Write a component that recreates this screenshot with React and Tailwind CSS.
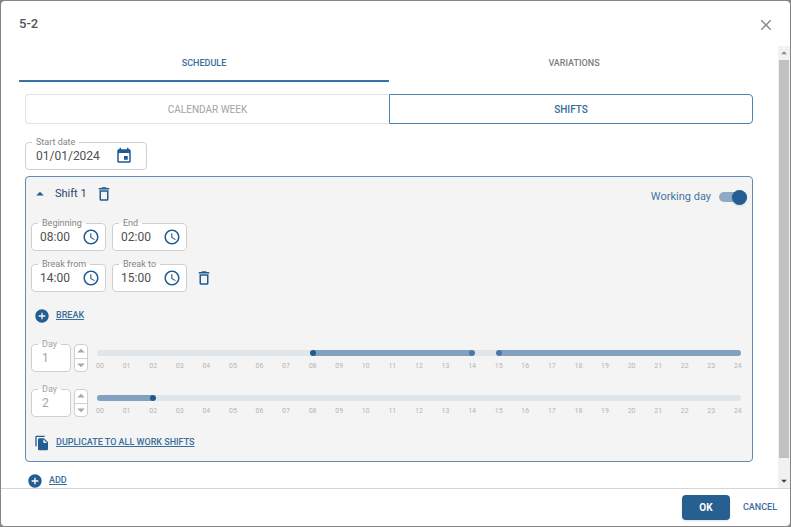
import { useState } from 'react';
import {
  MdAccessTime,
  MdAddCircle,
  MdArrowDropDown,
  MdArrowDropUp,
  MdClose,
  MdDeleteOutline,
  MdEvent,
  MdFileCopy,
} from 'react-icons/md';

const HOURS = Array.from({ length: 25 }, (_, i) => String(i).padStart(2, '0'));

const DAYS = [
  {
    day: 1,
    ranges: [{ from: 8, to: 14 }, { from: 15, to: 24, openEnd: true }],
    points: [{ at: 8, main: true }, { at: 14 }, { at: 15 }],
  },
  {
    day: 2,
    ranges: [{ from: 0, to: 2, openStart: true }],
    points: [{ at: 2, main: true }],
  },
];

const percent = (hour) => `${(hour / 24) * 100}%`;

function Field({ id, label, value, icon: Icon, iconLabel, className, rowClassName }) {
  const [text, setText] = useState(value);

  return (
    <fieldset className={`h-[33px] min-w-0 rounded border border-[#cfcfcf] bg-white ${className}`}>
      <legend className="ml-1.5 h-[10px] px-1 text-[9px] leading-[10px] text-[#858585]">
        <label htmlFor={id}>{label}</label>
      </legend>
      <div className={`flex h-[18px] items-center justify-between ${rowClassName}`}>
        <input
          id={id}
          type="text"
          value={text}
          onChange={(e) => setText(e.target.value)}
          className="h-[18px] w-0 flex-1 bg-transparent text-[12px] text-[#505050] outline-none"
        />
        <button type="button" aria-label={iconLabel} className="text-[#1f5a90]">
          <Icon className="size-[18px]" />
        </button>
      </div>
    </fieldset>
  );
}

function TimeField(props) {
  return (
    <Field {...props} icon={MdAccessTime} iconLabel="Select time" className="w-[75px]" rowClassName="pr-[5px] pl-2" />
  );
}

function LinkButton({ icon: Icon, children }) {
  return (
    <button type="button" className="flex h-4 items-center gap-1.5 text-[9px] font-medium text-[#386d9c]">
      <Icon className="size-4 text-[#245d92]" />
      <span className="underline underline-offset-1">{children}</span>
    </button>
  );
}

function DayRow({ day, ranges, points }) {
  return (
    <div className="flex items-end">
      <fieldset disabled className="h-[33px] w-[40px] min-w-0 rounded border border-[#cfcfcf] bg-white">
        <legend className="ml-1.5 h-[10px] px-1 text-[9px] leading-[10px] text-[#a5a5a5]">
          <label htmlFor={`day-${day}`}>Day</label>
        </legend>
        <input
          id={`day-${day}`}
          type="text"
          value={day}
          readOnly
          className="block h-[18px] w-full bg-transparent pl-2.5 text-[12px] text-[#a5a5a5]"
        />
      </fieldset>

      <div className="ml-[3px] flex h-7 w-[14px] flex-col divide-y divide-[#cfcfcf] rounded border border-[#cfcfcf] bg-white text-[#a8a8a8]">
        <button type="button" disabled aria-label="Next day" className="flex min-h-0 flex-1 items-center justify-center">
          <MdArrowDropUp className="size-[18px] shrink-0" />
        </button>
        <button type="button" disabled aria-label="Previous day" className="flex min-h-0 flex-1 items-center justify-center">
          <MdArrowDropDown className="size-[18px] shrink-0" />
        </button>
      </div>

      <div className="ml-[9px] h-[22px] flex-1">
        <div className="h-1.5 rounded-full bg-[#e0e5ea] px-[3px]">
          <div className="relative h-full">
            {ranges.map((r) => (
              <div
                key={r.from}
                className={`absolute inset-y-0 bg-[#82a1be] ${r.openStart ? '-ml-[3px] rounded-l-full' : ''} ${r.openEnd ? '-mr-[3px] rounded-r-full' : ''}`}
                style={{ left: percent(r.from), right: percent(24 - r.to) }}
              />
            ))}
            {points.map((p) => (
              <span
                key={p.at}
                className={`absolute top-0 -ml-[3px] size-1.5 rounded-full ${p.main ? 'bg-[#1f5a90]' : 'bg-[#4a7ba8]'}`}
                style={{ left: percent(p.at) }}
              />
            ))}
          </div>
        </div>
        <div className="mt-1.5 flex justify-between px-[3px] text-[7px] leading-[8px] text-[#b5b5b5]">
          {HOURS.map((h) => (
            <span key={h} className="flex w-0 justify-center">{h}</span>
          ))}
        </div>
      </div>
    </div>
  );
}

export default function App() {
  const [workingDay, setWorkingDay] = useState(true);

  return (
    <div className="h-screen bg-[#858585] p-px font-['Roboto',sans-serif]">
      <div role="dialog" aria-labelledby="title" className="flex h-full flex-col overflow-hidden rounded bg-white">
        <header className="flex h-[45px] shrink-0 items-center justify-between pr-[15px] pl-[18px]">
          <h1 id="title" className="text-[13px] font-medium text-[#555]">5-2</h1>
          <button type="button" aria-label="Close" className="pt-0.5 text-[#8a8a8a]">
            <MdClose className="size-[18px]" />
          </button>
        </header>

        <div className="flex min-h-0 flex-1">
          <main className="min-w-0 flex-1 overflow-hidden pr-[19px] pl-[18px]">
            <div role="tablist" className="grid h-9 grid-cols-2 text-[9px] font-medium">
              <button type="button" role="tab" aria-selected="true" className="border-b-2 border-[#3a72a4] pt-0.5 text-[#386d9c]">
                SCHEDULE
              </button>
              <button type="button" role="tab" aria-selected="false" className="border-b-2 border-transparent pt-0.5 text-[#7d7d7d]">
                VARIATIONS
              </button>
            </div>

            <div className="px-1.5 pt-3">
              <div className="grid h-[30px] grid-cols-2 text-[10px]">
                <button type="button" className="rounded-l border border-r-0 border-[#e2e2e2] text-[#a3a3a3]">
                  CALENDAR WEEK
                </button>
                <button type="button" className="rounded-r border border-[#4f82b0] font-medium text-[#386d9c]">
                  SHIFTS
                </button>
              </div>

              <div className="mt-[13px]">
                <Field
                  id="start-date"
                  label="Start date"
                  value="01/01/2024"
                  icon={MdEvent}
                  iconLabel="Select date"
                  className="w-[122px]"
                  rowClassName="pr-[13px] pl-2.5"
                />
              </div>

              {/* Shift panel */}
              <section className="mt-1.5 rounded border border-[#5f8db8] bg-[#f4f4f4] px-[5px] pt-2 pb-2.5">
                <div className="flex items-start justify-between">
                  <div className="flex h-[18px] items-center text-[#1f5a90]">
                    <button type="button" aria-label="Collapse">
                      <MdArrowDropUp className="size-[18px]" />
                    </button>
                    <h2 className="ml-1.5 text-[11px] text-[#2c3e70]">Shift 1</h2>
                    <button type="button" aria-label="Delete shift" className="ml-2">
                      <MdDeleteOutline className="size-[18px]" />
                    </button>
                  </div>
                  <label className="flex h-6 items-center gap-2 text-[11px] text-[#44749f]">
                    Working day
                    <input
                      type="checkbox"
                      role="switch"
                      checked={workingDay}
                      onChange={(e) => setWorkingDay(e.target.checked)}
                      className="peer sr-only"
                    />
                    <span className="flex h-2.5 w-7 items-center rounded-full bg-[#c4c4c4] peer-checked:justify-end peer-checked:bg-[#8faac6]">
                      <span className="size-[15px] shrink-0 rounded-full bg-[#245d92] shadow-sm" />
                    </span>
                  </label>
                </div>

                <div className="mt-[9px] flex gap-1.5">
                  <TimeField id="beginning" label="Beginning" value="08:00" />
                  <TimeField id="end" label="End" value="02:00" />
                </div>
                <div className="mt-2 flex items-end gap-1.5">
                  <TimeField id="break-from" label="Break from" value="14:00" />
                  <TimeField id="break-to" label="Break to" value="15:00" />
                  <button type="button" aria-label="Delete break" className="flex h-7 items-center pl-0.5 text-[#1f5a90]">
                    <MdDeleteOutline className="size-[18px]" />
                  </button>
                </div>

                <div className="mt-4 pl-[3px]">
                  <LinkButton icon={MdAddCircle}>BREAK</LinkButton>
                </div>

                <div className="mt-[15px] flex flex-col gap-3 pr-1.5">
                  {DAYS.map((d) => (
                    <DayRow key={d.day} {...d} />
                  ))}
                </div>

                <div className="mt-[18px] pl-[3px]">
                  <LinkButton icon={MdFileCopy}>DUPLICATE TO ALL WORK SHIFTS</LinkButton>
                </div>
              </section>

              <div className="mt-[11px] pl-0.5">
                <LinkButton icon={MdAddCircle}>ADD</LinkButton>
              </div>
            </div>
          </main>

          {/* Scrollbar */}
          <div aria-hidden="true" className="flex w-3 shrink-0 flex-col items-center bg-[#f1f1f1]">
            <MdArrowDropUp className="size-[14px] text-[#8a8a8a]" />
            <div className="w-2.5 flex-1 bg-[#c1c1c1]" />
            <div className="flex h-[30px] items-end">
              <MdArrowDropDown className="size-[14px] text-[#404040]" />
            </div>
          </div>
        </div>

        <footer className="flex h-[38px] shrink-0 items-center justify-end gap-[13px] border-t border-[#d5d5d5] pr-[13px]">
          <button type="button" className="h-[25px] w-12 rounded-sm bg-[#275f91] text-[10px] font-bold text-white shadow">
            OK
          </button>
          <button type="button" className="text-[9px] font-medium text-[#386d9c]">
            CANCEL
          </button>
        </footer>
      </div>
    </div>
  );
}
